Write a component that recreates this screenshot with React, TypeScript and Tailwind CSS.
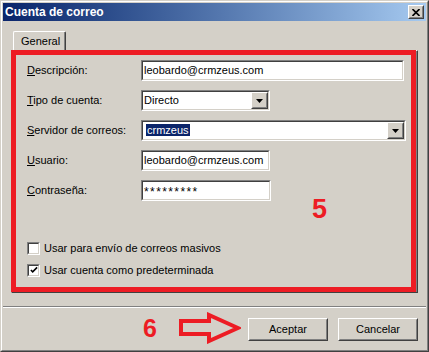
import React from "react";

const Sunken = ({ className = "", children }: { className?: string; children?: React.ReactNode }) => (
  <div className={`border border-t-[#808080] border-l-[#808080] border-r-white border-b-white ${className}`}>
    <div className="h-full w-full border border-t-[#404040] border-l-[#404040] border-r-[#d4d0c8] border-b-[#d4d0c8] bg-white flex items-center">
      {children}
    </div>
  </div>
);

const Raised = ({ className = "", children }: { className?: string; children?: React.ReactNode }) => (
  <div className={`border border-t-white border-l-white border-r-[#404040] border-b-[#404040] bg-[#d4d0c8] ${className}`}>
    <div className="h-full w-full border border-t-[#d4d0c8] border-l-[#d4d0c8] border-r-[#808080] border-b-[#808080] flex items-center justify-center">
      {children}
    </div>
  </div>
);

const Arrow = () => (
  <svg width="7" height="4" viewBox="0 0 7 4">
    <polygon points="0,0 7,0 3.5,4" fill="#000" />
  </svg>
);

const U = ({ children }: { children: React.ReactNode }) => (
  <span className="underline underline-offset-[1px] decoration-1">{children}</span>
);

const Check = ({ checked }: { checked?: boolean }) => (
  <Sunken className="w-[13px] h-[13px] shrink-0">
    {checked && (
      <svg width="9" height="9" viewBox="0 0 9 9" className="ml-[1px]">
        <path d="M1 4 L3 6 L8 1" stroke="#000" strokeWidth="1.8" fill="none" />
      </svg>
    )}
  </Sunken>
);

export default function App() {
  return (
    <div className="relative w-[429px] h-[352px] bg-[#d4d0c8] text-black text-[11px] [font-family:'Liberation_Sans',Arial,sans-serif] border border-t-[#d4d0c8] border-l-[#d4d0c8] border-r-[#404040] border-b-[#404040]">
      <div className="h-full w-full border border-t-white border-l-white border-r-[#808080] border-b-[#808080] p-[1px] flex flex-col">
        {/* Title bar */}
        <div className="h-[18px] shrink-0 flex items-center justify-between bg-gradient-to-r from-[#0a246a] to-[#a6caf0] pl-[2px] pr-[2px]">
          <span className="text-white font-bold text-[12px] leading-none">Cuenta de correo</span>
          <Raised className="w-[16px] h-[14px]">
            <svg width="8" height="7" viewBox="0 0 8 7">
              <path d="M0.5 0 L7.5 7 M7.5 0 L0.5 7" stroke="#000" strokeWidth="1.6" />
            </svg>
          </Raised>
        </div>

        {/* Tab */}
        <div className="mt-[10px] ml-[10px] h-[19px] w-[53px] shrink-0 border-t border-l border-white border-r border-r-[#404040] rounded-tl-[2px] rounded-tr-[2px] relative z-10">
          <div className="h-full w-full border-r border-r-[#808080] pl-[7px] pt-[2px] leading-[14px]">General</div>
        </div>

        {/* Panel */}
        <div className="mx-[8px] h-[243px] shrink-0 border border-t-white border-l-white border-r-[#404040] border-b-[#404040]">
          <div className="h-full w-full border-r border-b border-r-[#808080] border-b-[#808080] pt-[9px] pl-[15px] flex flex-col">
            <div className="flex items-center h-[21px]">
              <div className="w-[114px]"><U>D</U>escripción:</div>
              <Sunken className="w-[263px] h-[21px]"><span className="pl-[1px]">leobardo@crmzeus.com</span></Sunken>
            </div>
            <div className="flex items-center h-[21px] mt-[9px]">
              <div className="w-[114px]"><U>T</U>ipo de cuenta:</div>
              <Sunken className="w-[129px] h-[21px]">
                <span className="pl-[1px] flex-1">Directo</span>
                <Raised className="w-[17px] h-[17px]"><Arrow /></Raised>
              </Sunken>
            </div>
            <div className="flex items-center h-[21px] mt-[9px]">
              <div className="w-[114px]"><U>S</U>ervidor de correos:</div>
              <Sunken className="w-[265px] h-[21px]">
                <div className="flex-1 pl-[3px]">
                  <span className="bg-[#0a246a] text-white px-[1px] leading-[12px] inline-block">crmzeus</span>
                </div>
                <Raised className="w-[17px] h-[17px]"><Arrow /></Raised>
              </Sunken>
            </div>
            <div className="flex items-center h-[21px] mt-[9px]">
              <div className="w-[114px]"><U>U</U>suario:</div>
              <Sunken className="w-[129px] h-[21px]"><span className="pl-[1px]">leobardo@crmzeus.com</span></Sunken>
            </div>
            <div className="flex items-center h-[21px] mt-[9px]">
              <div className="w-[114px]"><U>C</U>ontraseña:</div>
              <Sunken className="w-[130px] h-[21px]"><span className="pl-[1px] tracking-[1.4px] text-[12px] leading-none pt-[3px]">*********</span></Sunken>
            </div>
            <div className="flex items-center h-[17px] mt-[39px] gap-[4px]">
              <Check />
              <span>Usar para envío de correos masivos</span>
            </div>
            <div className="flex items-center h-[17px] mt-[5px] gap-[4px]">
              <Check checked />
              <span>Usar cuenta como predeterminada</span>
            </div>
          </div>
        </div>

        {/* Separator */}
        <div className="mt-[13px] h-[2px] shrink-0 border-t border-t-[#808080] border-b border-b-white" />

        {/* Buttons */}
        <div className="mt-[10px] flex justify-end gap-[10px] pr-[8px]">
          <Raised className="w-[80px] h-[23px]">Aceptar</Raised>
          <Raised className="w-[80px] h-[23px]">Cancelar</Raised>
        </div>
      </div>

      {/* Annotations */}
      <div className="absolute left-[10px] top-[49px] w-[405px] h-[242px] border-[5px] border-[#ed1c24]" />
      <div className="absolute left-[311px] top-[195px] text-[27px] leading-[27px] font-bold text-[#ed1c24]">5</div>
      <div className="absolute left-[142px] top-[315px] text-[25px] leading-[25px] font-bold text-[#ed1c24]">6</div>
      <svg className="absolute left-[178px] top-[311px]" width="62" height="32" viewBox="0 0 62 32">
        <polygon points="2,9 30,9 30,3 59,16 30,29 30,22 2,22" fill="none" stroke="#ed1c24" strokeWidth="4" strokeLinejoin="miter" />
      </svg>
    </div>
  );
}
